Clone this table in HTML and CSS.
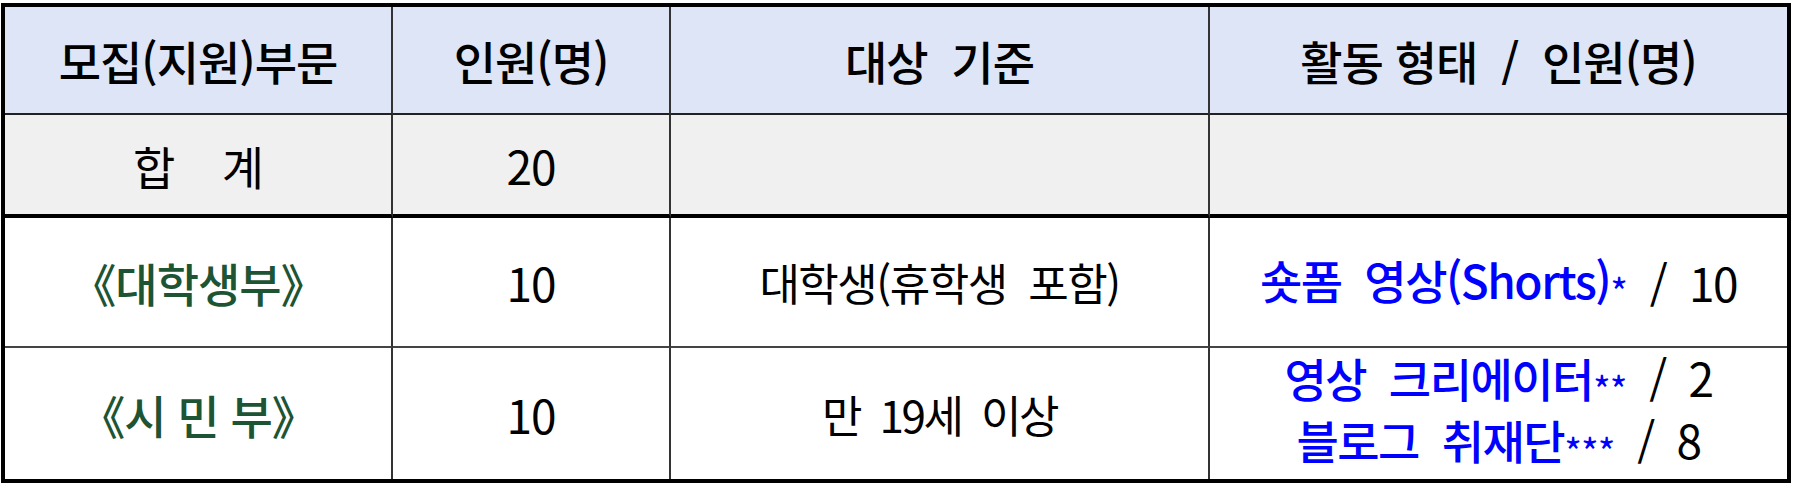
FILE: index.html
```html
<!DOCTYPE html>
<html lang="ko">
<head>
<meta charset="utf-8">
<link rel="stylesheet" href="styles.css">
</head>
<body>
<div class="page">
  <div class="grid">
    <div class="cell head">모집(지원)부문</div>
    <div class="cell head">인원(명)</div>
    <div class="cell head">대상&nbsp;&nbsp;기준</div>
    <div class="cell head last">활동 형태&nbsp;&nbsp;/&nbsp;&nbsp;인원(명)</div>

    <div class="cell total">합&nbsp;&nbsp;&nbsp;&nbsp;계</div>
    <div class="cell total">20</div>
    <div class="cell total"></div>
    <div class="cell total last"></div>

    <div class="cell r3 green">《대학생부》</div>
    <div class="cell r3">10</div>
    <div class="cell r3 crit">대학생(휴학생&nbsp;&nbsp;포함)</div>
    <div class="cell r3 last act"><span class="blue">숏폼&nbsp;&nbsp;영상(Shorts)<span class="ast">*</span></span>&nbsp;&nbsp;/&nbsp;&nbsp;10</div>

    <div class="cell r4 green">《시&nbsp;민&nbsp;부》</div>
    <div class="cell r4">10</div>
    <div class="cell r4 crit age">만&nbsp;&nbsp;19세&nbsp;&nbsp;이상</div>
    <div class="cell r4 last act multi">
      <div class="ln"><span class="blue">영상&nbsp;&nbsp;크리에이터<span class="ast">**</span></span>&nbsp;&nbsp;/&nbsp;&nbsp;2</div>
      <div class="ln"><span class="blue">블로그&nbsp;&nbsp;취재단<span class="ast">***</span></span>&nbsp;&nbsp;/&nbsp;&nbsp;8</div>
    </div>
  </div>
</div>
</body>
</html>
```

FILE: styles.css
```css
html, body {
  margin: 0;
  padding: 0;
  background: #ffffff;
}
.page {
  padding: 3px 0 0 1px;
}
.grid {
  width: 1782px;
  border: 4px solid #000;
  display: grid;
  grid-template-columns: 388px 278px 539px 577px;
  grid-template-rows: 108px 103px 130px 131px;
  font-family: "Noto Sans CJK KR", "Noto Sans", sans-serif;
  font-size: 46px;
  letter-spacing: -1px;
  color: #000;
}
.cell {
  display: flex;
  align-items: center;
  justify-content: center;
  border-right: 2px solid #333;
  box-sizing: border-box;
  white-space: nowrap;
  background: #fff;
}
.cell.last {
  border-right: none;
}
.head {
  background: #dde5f6;
  border-bottom: 2px solid #222;
  font-weight: 500;
}
.total {
  background: #f0f0f0;
  border-bottom: 4px solid #000;
}
.r3 {
  border-bottom: 2px solid #444;
}
.green {
  color: #1c5434;
  font-weight: 500;
}
.crit {
  font-size: 44px;
  letter-spacing: -1.5px;
}
.crit.age {
  letter-spacing: -2.5px;
}
.act {
  font-size: 46px;
  letter-spacing: -1.5px;
}
.blue {
  color: #0000ff;
  font-weight: 500;
}
.ast {
  font-size: 38px;
  font-weight: 400;
  letter-spacing: -1px;
  vertical-align: -8px;
}
.multi {
  flex-direction: column;
  line-height: 51px;
}
```
